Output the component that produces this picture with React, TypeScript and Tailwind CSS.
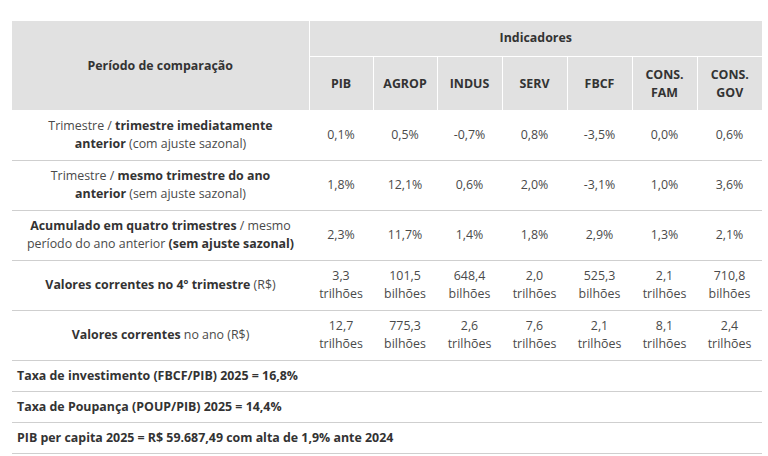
const cols = ["PIB", "AGROP", "INDUS", "SERV", "FBCF", "CONS. FAM", "CONS. GOV"]

const rows: { label: React.ReactNode; values: [string, string?][] }[] = [
  {
    label: (
      <>
        Trimestre / <b className="font-bold text-[#333]">trimestre imediatamente anterior</b> (com ajuste sazonal)
      </>
    ),
    values: [["0,1%"], ["0,5%"], ["-0,7%"], ["0,8%"], ["-3,5%"], ["0,0%"], ["0,6%"]],
  },
  {
    label: (
      <>
        Trimestre / <b className="font-bold text-[#333]">mesmo trimestre do ano anterior</b> (sem ajuste sazonal)
      </>
    ),
    values: [["1,8%"], ["12,1%"], ["0,6%"], ["2,0%"], ["-3,1%"], ["1,0%"], ["3,6%"]],
  },
  {
    label: (
      <>
        <b className="font-bold text-[#333]">Acumulado em quatro trimestres</b> / mesmo período do ano anterior{" "}
        <b className="font-bold text-[#333]">(sem ajuste sazonal)</b>
      </>
    ),
    values: [["2,3%"], ["11,7%"], ["1,4%"], ["1,8%"], ["2,9%"], ["1,3%"], ["2,1%"]],
  },
  {
    label: (
      <>
        <b className="font-bold text-[#333]">Valores correntes no 4º trimestre</b> (R$)
      </>
    ),
    values: [
      ["3,3", "trilhões"],
      ["101,5", "bilhões"],
      ["648,4", "bilhões"],
      ["2,0", "trilhões"],
      ["525,3", "bilhões"],
      ["2,1", "trilhões"],
      ["710,8", "bilhões"],
    ],
  },
  {
    label: (
      <>
        <b className="font-bold text-[#333]">Valores correntes</b> no ano (R$)
      </>
    ),
    values: [
      ["12,7", "trilhões"],
      ["775,3", "bilhões"],
      ["2,6", "trilhões"],
      ["7,6", "trilhões"],
      ["2,1", "trilhões"],
      ["8,1", "trilhões"],
      ["2,4", "trilhões"],
    ],
  },
]

const notes = [
  "Taxa de investimento (FBCF/PIB) 2025 = 16,8%",
  "Taxa de Poupança (POUP/PIB) 2025 = 14,4%",
  "PIB per capita 2025 = R$ 59.687,49 com alta de 1,9% ante 2024",
]

export default function App() {
  return (
    <div className="w-[768px] h-[456px] bg-white pt-[21px] pl-[12px] font-['Open_Sans',sans-serif] text-[12.4px] leading-[18px] text-[#4a4a4a]">
      <table className="w-[750px] table-fixed border-collapse">
        <colgroup>
          <col className="w-[297px]" />
          <col className="w-[64px]" />
          <col className="w-[64px]" />
          <col className="w-[65px]" />
          <col className="w-[65px]" />
          <col className="w-[65px]" />
          <col className="w-[65px]" />
          <col className="w-[65px]" />
        </colgroup>
        <thead className="bg-[#e1e1e1] text-[#333] font-bold">
          <tr className="h-[35px]">
            <th rowSpan={2} className="border-r border-white font-bold">
              Período de comparação
            </th>
            <th colSpan={7} className="border-b border-white font-bold">
              Indicadores
            </th>
          </tr>
          <tr className="h-[54px]">
            {cols.map((c, i) => (
              <th
                key={c}
                className={`px-1 pt-[2px] font-bold ${i < cols.length - 1 ? "border-r border-white" : ""}`}
              >
                {c}
              </th>
            ))}
          </tr>
        </thead>
        <tbody>
          {rows.map((r, i) => (
            <tr key={i} className="h-[50px] border-b border-[#cfcfcf]">
              <td className="px-[12px] text-center">{r.label}</td>
              {r.values.map(([a, b], j) => (
                <td key={j} className="text-center px-0">
                  {a}
                  {b && (
                    <>
                      <br />
                      {b}
                    </>
                  )}
                </td>
              ))}
            </tr>
          ))}
          {notes.map((n) => (
            <tr key={n} className="h-[31px] border-b border-[#cfcfcf]">
              <td colSpan={8} className="pl-[5px] font-bold text-[#333]">
                {n}
              </td>
            </tr>
          ))}
        </tbody>
      </table>
    </div>
  )
}
